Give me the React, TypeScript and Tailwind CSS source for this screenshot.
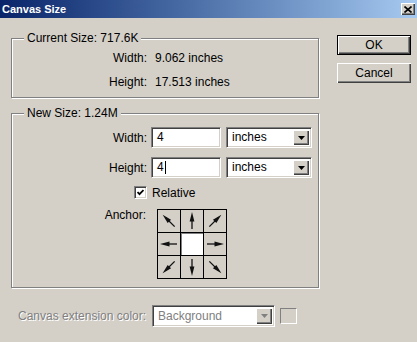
import React from "react";

const raised =
  "shadow-[inset_1px_1px_0_#ffffff,inset_-1px_-1px_0_#404040,inset_-2px_-2px_0_#808080]";
const sunken =
  "border border-t-[#808080] border-l-[#808080] border-b-white border-r-white shadow-[inset_1px_1px_0_#404040,inset_-1px_-1px_0_#d4d0c8]";

const Arrow = ({ angle }: { angle: number }) => (
  <svg width="22" height="22" viewBox="0 0 22 22">
    <g transform={`rotate(${angle} 11 11)`}>
      <line x1="11" y1="19" x2="11" y2="6" stroke="#111" strokeWidth="1.3" />
      <polygon points="11,2 8.6,11.5 13.4,11.5" fill="#111" />
    </g>
  </svg>
);

const DropButton = ({ disabled = false }: { disabled?: boolean }) => (
  <div
    className={`w-[16px] h-full bg-[#d4d0c8] flex items-center justify-center ${raised}`}
  >
    <svg width="7" height="4" viewBox="0 0 7 4">
      <polygon points="0,0 7,0 3.5,4" fill={disabled ? "#808080" : "#000"} />
    </svg>
  </div>
);

const UnitSelect = () => (
  <div className={`ml-[5px] w-[86px] h-[21px] bg-white flex items-stretch p-[2px] ${sunken}`}>
    <span className="flex-1 pl-[3px] leading-[15px]">inches</span>
    <DropButton />
  </div>
);

const Legend = ({ text }: { text: string }) => (
  <legend className="ml-[12px] px-[3px] leading-[14px] bg-[#d4d0c8]">{text}</legend>
);

const fieldsetCls =
  "w-[308px] border border-[#808080] shadow-[inset_1px_1px_0_#ffffff,1px_1px_0_#ffffff]";

const anchors = [315, 0, 45, 270, -1, 90, 225, 180, 135];

export default function App() {
  return (
    <div
      className="w-[417px] h-[342px] bg-[#d4d0c8] text-[12px] text-black overflow-hidden"
      style={{ fontFamily: '"Liberation Sans", Arial, sans-serif' }}
    >
      {/* title bar */}
      <div className="h-[18px] flex items-center justify-between pl-[2px] pr-[2px] bg-gradient-to-r from-[#0a246a] to-[#a6caf0]">
        <span className="text-white font-bold text-[11px] leading-[18px]">Canvas Size</span>
        <div className={`w-[14px] h-[12px] bg-[#d4d0c8] flex items-center justify-center ${raised}`}>
          <svg width="8" height="7" viewBox="0 0 8 7">
            <path d="M0.5 0.5 L7.5 6.5 M7.5 0.5 L0.5 6.5" stroke="#000" strokeWidth="1.6" />
          </svg>
        </div>
      </div>

      <div className="flex items-start pl-[11px]">
        {/* left column */}
        <div className="flex flex-col">
          <fieldset className={`mt-[13px] ${fieldsetCls} pt-[6px] pb-[8px]`}>
            <Legend text="Current Size: 717.6K" />
            <div className="flex flex-col gap-[10px] leading-[14px]">
              <div className="flex">
                <span className="w-[135px] text-right">Width:</span>
                <span className="ml-[8px]">9.062 inches</span>
              </div>
              <div className="flex">
                <span className="w-[135px] text-right">Height:</span>
                <span className="ml-[8px]">17.513 inches</span>
              </div>
            </div>
          </fieldset>

          <fieldset className={`mt-[8px] ${fieldsetCls} pt-[7px] pb-[8px]`}>
            <Legend text="New Size: 1.24M" />
            <div className="flex flex-col">
              <div className="flex items-center h-[21px]">
                <span className="w-[135px] text-right">Width:</span>
                <div className={`ml-[4px] w-[70px] h-[21px] bg-white pl-[5px] leading-[19px] ${sunken}`}>4</div>
                <UnitSelect />
              </div>
              <div className="flex items-center h-[21px] mt-[9px]">
                <span className="w-[135px] text-right">Height:</span>
                <div className={`ml-[4px] w-[70px] h-[21px] bg-white pl-[5px] leading-[19px] flex items-center ${sunken}`}>
                  <span>4</span>
                  <span className="w-px h-[13px] bg-black ml-[1px]" />
                </div>
                <UnitSelect />
              </div>
              <div className="flex items-center h-[13px] mt-[8px]">
                <div className="w-[135px] flex justify-end">
                  <div className={`w-[13px] h-[13px] bg-white flex items-center justify-center ${sunken}`}>
                    <svg width="7" height="7" viewBox="0 0 7 7">
                      <path d="M0.5 3 L2.5 5.2 L6.5 1" stroke="#000" strokeWidth="1.8" fill="none" />
                    </svg>
                  </div>
                </div>
                <span className="ml-[5px] leading-[14px]">Relative</span>
              </div>
              <div className="flex items-start mt-[10px]">
                <span className="w-[134px] text-right leading-[14px] -mt-[1px]">Anchor:</span>
                <div className="ml-[11px] grid grid-cols-3 gap-px bg-black p-px">
                  {anchors.map((a, i) =>
                    a < 0 ? (
                      <div
                        key={i}
                        className="w-[22px] h-[22px] bg-white shadow-[inset_1px_1px_0_#808080]"
                      />
                    ) : (
                      <div key={i} className="w-[22px] h-[22px] bg-[#d4d0c8]">
                        <Arrow angle={a} />
                      </div>
                    )
                  )}
                </div>
              </div>
            </div>
          </fieldset>
        </div>

        {/* right column */}
        <div className="ml-[18px] mt-[17px] flex flex-col gap-[8px]">
          <button className={`w-[74px] h-[20px] border border-black bg-[#d4d0c8] leading-[16px] ${raised}`}>
            OK
          </button>
          <button className={`w-[74px] h-[20px] bg-[#d4d0c8] leading-[18px] ${raised}`}>
            Cancel
          </button>
        </div>
      </div>

      {/* extension color row */}
      <div className="flex items-center mt-[17px] pl-[18px]">
        <div className="w-[134px] shrink-0 whitespace-nowrap">
          <span className="text-[#808080] [text-shadow:1px_1px_0_#ffffff] leading-[14px]">
            Canvas extension color:
          </span>
        </div>
        <div className={`w-[123px] h-[22px] bg-white flex items-stretch p-[2px] ${sunken}`}>
          <span className="flex-1 pl-[3px] leading-[16px] text-[#808080]">Background</span>
          <DropButton disabled />
        </div>
        <div className="ml-[5px] w-[17px] h-[16px] bg-[#d4d0c8] border border-t-[#808080] border-l-[#808080] border-b-white border-r-white" />
      </div>
    </div>
  );
}
